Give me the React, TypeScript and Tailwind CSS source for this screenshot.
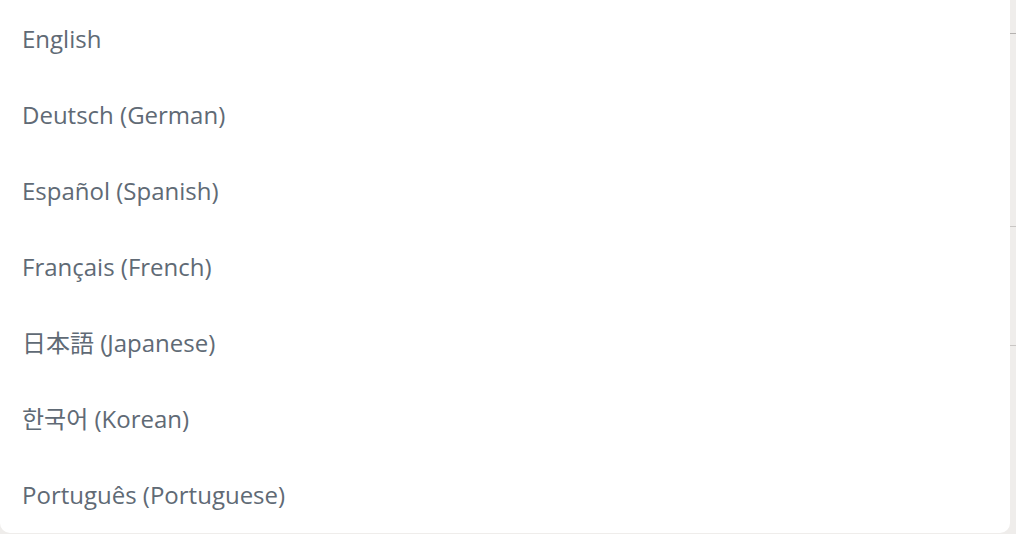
const languages = [
  'English',
  'Deutsch (German)',
  'Español (Spanish)',
  'Français (French)',
  '日本語 (Japanese)',
  '한국어 (Korean)',
  'Português (Portuguese)',
];

export default function App() {
  return (
    <div className="flex h-[534px] w-[1016px] overflow-hidden bg-[#efedeb]">
      <div className="flex h-[533px] w-[1010px] flex-col rounded-b-[10px] bg-white pt-px">
        {languages.map((lang) => (
          <div
            key={lang}
            className="flex h-[76px] shrink-0 items-center px-[22px] text-[24px] text-[#606a75]"
            style={{ fontFamily: '"Open Sans", "Noto Sans CJK JP", "Noto Sans CJK KR", sans-serif' }}
          >
            {lang}
          </div>
        ))}
      </div>
      <div className="flex-1">
        <div className="mt-[33px] h-px bg-[#b5b2b0]" />
        <div className="mt-[192px] h-px bg-[#c9c6c4]" />
        <div className="mt-[118px] h-px bg-[#c9c6c4]" />
      </div>
    </div>
  );
}
